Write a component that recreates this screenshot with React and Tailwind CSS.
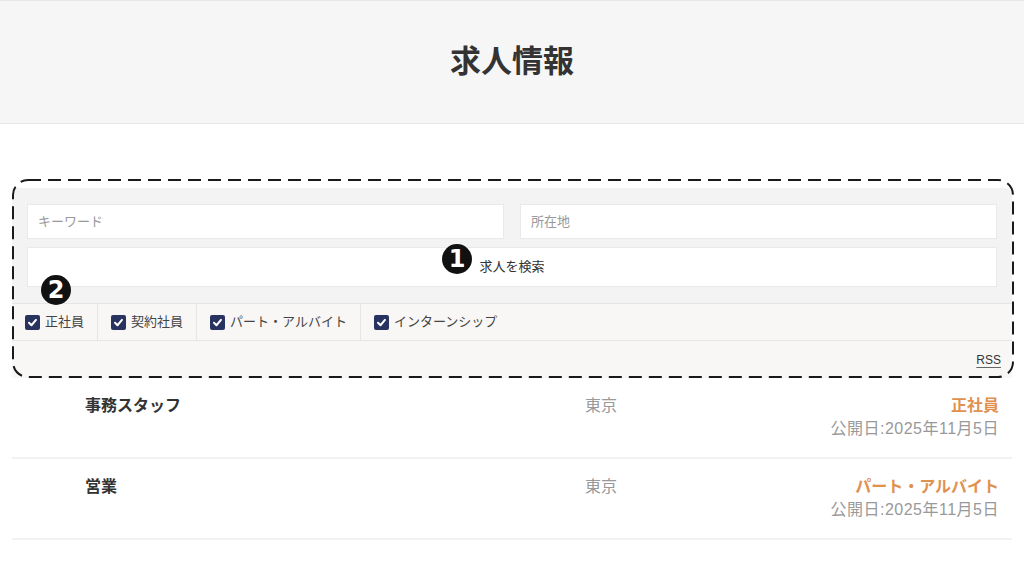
import React from "react";

const jp = { fontFamily: '"Liberation Sans", "Noto Sans CJK JP", sans-serif' };

const types = ["正社員", "契約社員", "パート・アルバイト", "インターンシップ"];

const jobs = [
  { title: "事務スタッフ", place: "東京", type: "正社員", date: "公開日:2025年11月5日" },
  { title: "営業", place: "東京", type: "パート・アルバイト", date: "公開日:2025年11月5日" },
];

function Check() {
  return (
    <span className="w-[15px] h-[15px] rounded-[2px] bg-[#29335f] flex items-center justify-center shrink-0">
      <svg width="11" height="11" viewBox="0 0 12 12" fill="none">
        <path d="M2.2 6.3 L4.9 9 L9.8 3.2" stroke="white" strokeWidth="2.2" strokeLinecap="round" strokeLinejoin="round" />
      </svg>
    </span>
  );
}

function Badge({ n, className }) {
  return (
    <div
      className={`absolute w-[30px] h-[30px] rounded-full bg-[#111] text-white flex items-center justify-center text-[24px] font-black leading-none ${className}`}
      style={{ fontFamily: '"DejaVu Sans", sans-serif' }}
    >
      {n}
    </div>
  );
}

export default function App() {
  return (
    <div className="min-h-screen bg-white text-[#333]" style={jp}>
      <header className="h-[124px] bg-[#f6f6f6] border-y border-[#e6e6e6] flex items-center justify-center">
        <h1 className="text-[31px] font-bold text-[#333]">求人情報</h1>
      </header>

      <main className="px-3 pt-16">
        <div className="relative">
          <div className="bg-[#f3f3f3] px-[15px] pt-4 pb-4">
            <div className="flex gap-4">
              <div className="flex-1 h-[35px] bg-white border border-[#e9e9e9] flex items-center px-[10px] text-[13px] text-[#999]">
                キーワード
              </div>
              <div className="flex-1 h-[35px] bg-white border border-[#e9e9e9] flex items-center px-[10px] text-[13px] text-[#999]">
                所在地
              </div>
            </div>
            <button className="mt-2 w-full h-[40px] bg-white border border-[#e9e9e9] text-[13px] text-[#333] flex items-center justify-center">
              求人を検索
            </button>
          </div>

          <div className="bg-[#f8f7f6]">
            <div className="h-[38px] flex border-y border-[#e7e6e5]">
              {types.map((t) => (
                <label
                  key={t}
                  className="flex items-center gap-[5px] px-[13px] border-r border-[#e7e6e5] text-[13px] text-[#444] last:border-r-0"
                >
                  <Check />
                  {t}
                </label>
              ))}
            </div>
            <div className="h-[37px] flex items-center justify-end pr-[11px]">
              <a className="text-[12px] text-[#333] underline underline-offset-[3px] decoration-[#666]">RSS</a>
            </div>
          </div>

          <svg className="absolute -top-[9px] left-0 pointer-events-none" width="1002" height="200" fill="none">
            <rect x="1" y="1" width="1000" height="197" rx="15" stroke="#1a1a1a" strokeWidth="2" strokeDasharray="13 7" />
          </svg>
          <Badge n="1" className="left-[430px] top-[56px]" />
          <Badge n="2" className="left-[29px] top-[87px]" />
        </div>

        <div>
          {jobs.map((j) => (
            <div key={j.title} className="flex pl-[73px] pr-[13px] pt-4 pb-[17px] border-b-2 border-[#f2f2f2]">
              <div className="w-[500px] text-[16px] font-bold leading-[23px] text-[#333]">{j.title}</div>
              <div className="flex-1 text-[16px] leading-[23px] text-[#999]">{j.place}</div>
              <div className="text-right text-[16px] leading-[23px]">
                <div className="font-bold text-[#e0914f]">{j.type}</div>
                <div className="text-[#999] tracking-[0.5px]">{j.date}</div>
              </div>
            </div>
          ))}
        </div>
      </main>
    </div>
  );
}
